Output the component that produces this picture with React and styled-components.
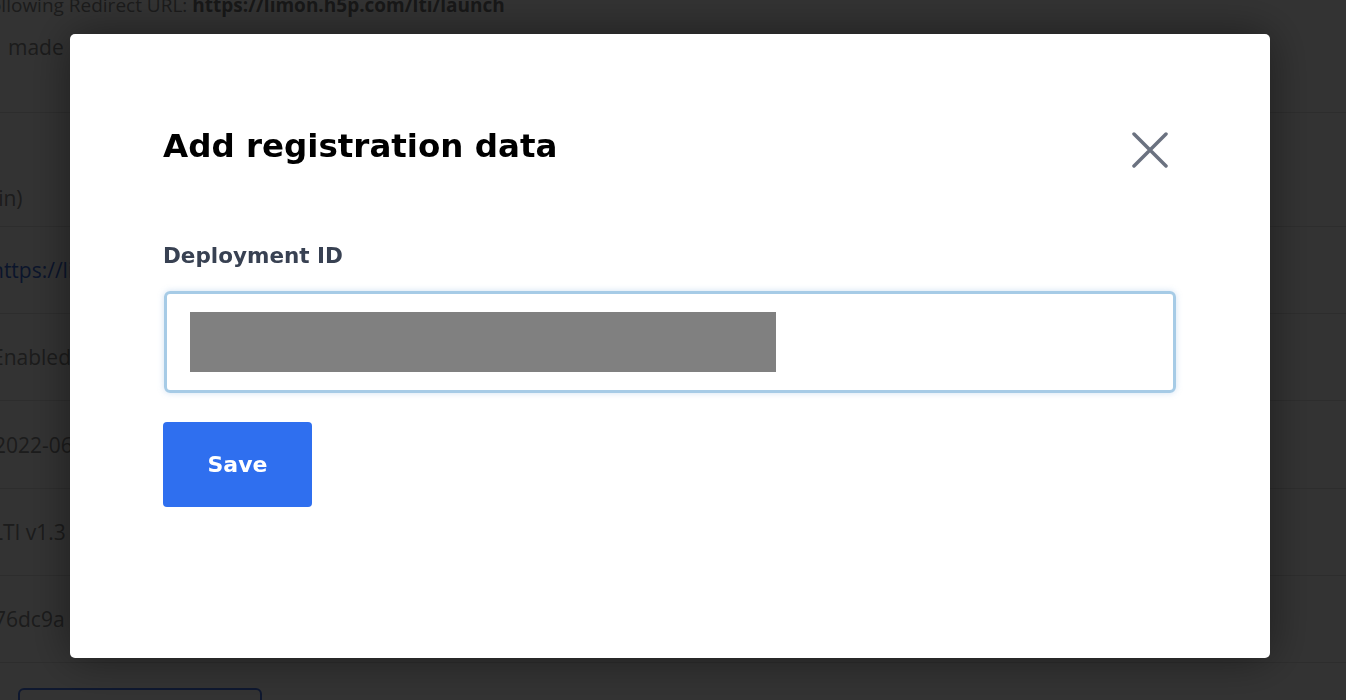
import { styled, createGlobalStyle } from 'styled-components';

const GlobalStyle = createGlobalStyle`
  html, body {
    margin: 0;
    padding: 0;
    background: #ffffff;
    font-family: "DejaVu Sans", "Open Sans", sans-serif;
    overflow: hidden;
  }
`;

// Página de fondo (queda oscurecida por el overlay)
const Page = styled.div`
  width: 1346px;
  height: 700px;
  overflow: hidden;
  color: #8a8a8a;
  font-size: 21px;
  font-family: "Open Sans", sans-serif;
`;

const Intro = styled.div`
  margin-left: -89px;
  margin-top: -9px;
  height: 122px;
  display: flex;
  flex-direction: column;
  font-size: 19px;
  line-height: 28px;
  gap: 14px;
  border-bottom: 1px solid #e2e2e2;
  box-sizing: border-box;
  white-space: nowrap;
`;

const Strong = styled.strong`
  font-weight: 700;
  color: #777;
`;

const Made = styled.span`
  margin-left: 97px;
  font-size: 21px;
`;

const Row = styled.div`
  height: ${(p) => p.$h}px;
  display: flex;
  align-items: ${(p) => (p.$bottom ? 'flex-end' : 'center')};
  padding-bottom: ${(p) => (p.$bottom ? 14 : 0)}px;
  margin-left: ${(p) => p.$shift}px;
  border-bottom: 1px solid #e2e2e2;
  box-sizing: border-box;
  white-space: nowrap;
  color: ${(p) => (p.$link ? '#3a6ad8' : '#8a8a8a')};
`;

const GhostButton = styled.div`
  margin: 25px 0 0 18px;
  width: 244px;
  height: 50px;
  border: 2px solid #4a78e8;
  border-radius: 6px;
  box-sizing: border-box;
`;

const Overlay = styled.div`
  position: fixed;
  inset: 0;
  background: rgba(0, 0, 0, 0.8);
  display: flex;
  justify-content: center;
  align-items: flex-start;
  padding-top: 34px;
  box-sizing: border-box;
`;

const Modal = styled.div`
  width: 1200px;
  height: 624px;
  margin-left: -6px;
  background: #ffffff;
  border-radius: 5px;
  box-shadow: 0 0 45px rgba(0, 0, 0, 0.45);
  box-sizing: border-box;
  padding: 88px 94px 0 93px;
  display: flex;
  flex-direction: column;
`;

const Header = styled.div`
  display: flex;
  justify-content: space-between;
  align-items: flex-start;
`;

const Title = styled.h2`
  margin: 0;
  font-size: 32.5px;
  line-height: 48px;
  font-weight: 700;
  color: #000;
`;

const CloseButton = styled.button`
  border: 0;
  background: none;
  padding: 0;
  margin: 10px 8px 0 0;
  width: 36px;
  height: 36px;
  cursor: pointer;
  display: flex;
  align-items: center;
  justify-content: center;
`;

const Label = styled.label`
  margin-top: 72px;
  font-size: 21.5px;
  line-height: 28px;
  font-weight: 700;
  color: #384152;
`;

const InputBox = styled.div`
  margin-top: 21px;
  margin-left: 1px;
  height: 102px;
  border: 3px solid #a6cbe6;
  border-radius: 6px;
  box-shadow: 0 0 6px rgba(120, 170, 220, 0.35);
  box-sizing: border-box;
  display: flex;
  align-items: center;
  padding-left: 23px;
`;

const Redacted = styled.div`
  width: 586px;
  height: 60px;
  background: #808080;
`;

const SaveButton = styled.button`
  margin-top: 29px;
  width: 149px;
  height: 85px;
  border: 0;
  border-radius: 4px;
  background: #2f6fef;
  color: #ffffff;
  font-family: inherit;
  font-size: 22px;
  font-weight: 700;
  cursor: pointer;
`;

export default function App() {
  return (
    <>
      <GlobalStyle />
      <Page>
        <Intro>
          <span>
            Use the following Redirect URL: <Strong>https://limon.h5p.com/lti/launch</Strong>
          </span>
          <Made>made</Made>
        </Intro>
        <Row $h={114} $shift={-52} $bottom>(admin)</Row>
        <Row $h={87} $shift={-9} $link>https://limon.h5p.com</Row>
        <Row $h={87} $shift={-8}>Enabled</Row>
        <Row $h={88} $shift={-6}>2022-06-01</Row>
        <Row $h={87} $shift={-8}>LTI v1.3</Row>
        <Row $h={87} $shift={-6}>76dc9a</Row>
        <GhostButton />
      </Page>
      <Overlay>
        <Modal>
          <Header>
            <Title>Add registration data</Title>
            <CloseButton aria-label="Close">
              <svg width="36" height="36" viewBox="0 0 36 36" fill="none">
                <path d="M2 2L34 34M34 2L2 34" stroke="#6b7280" strokeWidth="3.5" strokeLinecap="round" />
              </svg>
            </CloseButton>
          </Header>
          <Label>Deployment ID</Label>
          <InputBox>
            <Redacted />
          </InputBox>
          <div>
            <SaveButton>Save</SaveButton>
          </div>
        </Modal>
      </Overlay>
    </>
  );
}
